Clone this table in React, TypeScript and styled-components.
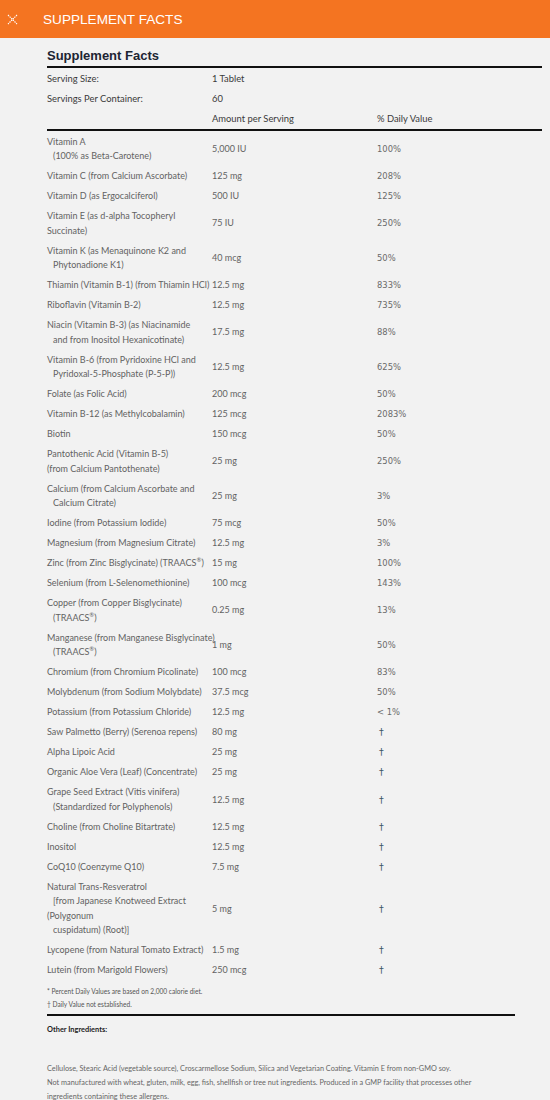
import React from 'react';
import styled, { createGlobalStyle } from 'styled-components';

const GlobalStyle = createGlobalStyle`
	html, body {
		margin: 0;
		padding: 0;
		background: #f2f2f2;
	}
	body {
		font-family: Lato, 'Liberation Sans', Arial, sans-serif;
	}
`;

const Page = styled.div`
	width: 550px;
	min-height: 1100px;
	background: #f2f2f2;
`;

const TopBar = styled.div`
	height: 38px;
	background: #f47421;
	display: flex;
	align-items: center;
	padding-left: 6px;
	gap: 25px;
`;

const CloseButton = styled.button`
	width: 12px;
	height: 12px;
	padding: 0;
	border: 0;
	background: transparent;
	display: flex;
	align-items: center;
	justify-content: center;
	cursor: pointer;
`;

const BarTitle = styled.h1`
	margin: 0;
	font-family: 'Liberation Sans', Arial, sans-serif;
	font-weight: 400;
	font-size: 13.6px;
	color: #ffffff;
`;

const Content = styled.div`
	padding: 9px 8px 0 47px;
`;

const Heading = styled.h2`
	margin: 0;
	font-family: 'Liberation Sans', Arial, sans-serif;
	font-weight: 700;
	font-size: 13px;
	line-height: 18px;
	color: #1d2533;
	padding-bottom: 1px;
	border-bottom: 2px solid #111;
`;

const Grid = styled.div`
	display: grid;
	grid-template-columns: 165px 165px 1fr;
`;

const MetaRow = styled(Grid)`
	height: 20.3px;
	align-items: center;
	font-size: 9.4px;
	color: #3a3a3a;
`;

const HeadRow = styled(MetaRow)`
	border-bottom: 2px solid #111;
`;

const Table = styled.div`
	padding-top: 1px;
`;

const Row = styled(Grid)`
	align-items: center;
	padding: 2.9px 0;
	font-size: 9px;
	line-height: 14.3px;
	color: #626262;
`;

const Name = styled.div`
	display: flex;
	flex-direction: column;
	white-space: nowrap;
`;

const NameLine = styled.span<{ $indent?: boolean }>`
	padding-left: ${(p) => (p.$indent ? '6px' : '0')};
`;

const Amount = styled.div`
	white-space: nowrap;
`;

const Daily = styled.div<{ $dagger?: boolean }>`
	font-family: 'DejaVu Sans', Verdana, sans-serif;
	font-size: ${(p) => (p.$dagger ? '9.5px' : '8.4px')};
	color: ${(p) => (p.$dagger ? '#3d5566' : '#6a6a6a')};
	padding-left: ${(p) => (p.$dagger ? '2px' : '0')};
`;

const Sup = styled.sup`
	font-size: 6px;
	line-height: 0;
`;

const Notes = styled.div`
	padding: 5px 0 3px;
	font-size: 6.6px;
	line-height: 13px;
	color: #555;
	width: 468px;
	border-bottom: 2px solid #111;
`;

const OtherTitle = styled.div`
	padding-top: 9px;
	font-size: 7.4px;
	font-weight: 700;
	color: #222;
`;

const Paragraphs = styled.div`
	padding-top: 28px;
	display: flex;
	flex-direction: column;
	gap: 0.5px;
`;

const Paragraph = styled.p`
	margin: 0;
	font-size: 7.3px;
	line-height: 13.5px;
	color: #666;
	width: 446px;
`;

interface Nutrient {
	lines: string[];
	/** indexes of lines that are indented */
	indent?: number[];
	amount: string;
	daily: string;
}

const TR = 'TRAACS';

const nutrients: Nutrient[] = [
	{ lines: ['Vitamin A', '(100% as Beta-Carotene)'], indent: [1], amount: '5,000 IU', daily: '100%' },
	{ lines: ['Vitamin C (from Calcium Ascorbate)'], amount: '125 mg', daily: '208%' },
	{ lines: ['Vitamin D (as Ergocalciferol)'], amount: '500 IU', daily: '125%' },
	{ lines: ['Vitamin E (as d-alpha Tocopheryl', 'Succinate)'], amount: '75 IU', daily: '250%' },
	{ lines: ['Vitamin K (as Menaquinone K2 and', 'Phytonadione K1)'], indent: [1], amount: '40 mcg', daily: '50%' },
	{ lines: ['Thiamin (Vitamin B-1) (from Thiamin HCl)'], amount: '12.5 mg', daily: '833%' },
	{ lines: ['Riboflavin (Vitamin B-2)'], amount: '12.5 mg', daily: '735%' },
	{ lines: ['Niacin (Vitamin B-3) (as Niacinamide', 'and from Inositol Hexanicotinate)'], indent: [1], amount: '17.5 mg', daily: '88%' },
	{ lines: ['Vitamin B-6 (from Pyridoxine HCl and', 'Pyridoxal-5-Phosphate (P-5-P))'], indent: [1], amount: '12.5 mg', daily: '625%' },
	{ lines: ['Folate (as Folic Acid)'], amount: '200 mcg', daily: '50%' },
	{ lines: ['Vitamin B-12 (as Methylcobalamin)'], amount: '125 mcg', daily: '2083%' },
	{ lines: ['Biotin'], amount: '150 mcg', daily: '50%' },
	{ lines: ['Pantothenic Acid (Vitamin B-5)', '(from Calcium Pantothenate)'], amount: '25 mg', daily: '250%' },
	{ lines: ['Calcium (from Calcium Ascorbate and', 'Calcium Citrate)'], indent: [1], amount: '25 mg', daily: '3%' },
	{ lines: ['Iodine (from Potassium Iodide)'], amount: '75 mcg', daily: '50%' },
	{ lines: ['Magnesium (from Magnesium Citrate)'], amount: '12.5 mg', daily: '3%' },
	{ lines: ['Zinc (from Zinc Bisglycinate) (' + TR + '®)'], amount: '15 mg', daily: '100%' },
	{ lines: ['Selenium (from L-Selenomethionine)'], amount: '100 mcg', daily: '143%' },
	{ lines: ['Copper (from Copper Bisglycinate)', '(' + TR + '®)'], indent: [1], amount: '0.25 mg', daily: '13%' },
	{ lines: ['Manganese (from Manganese Bisglycinate)', '(' + TR + '®)'], indent: [1], amount: '1 mg', daily: '50%' },
	{ lines: ['Chromium (from Chromium Picolinate)'], amount: '100 mcg', daily: '83%' },
	{ lines: ['Molybdenum (from Sodium Molybdate)'], amount: '37.5 mcg', daily: '50%' },
	{ lines: ['Potassium (from Potassium Chloride)'], amount: '12.5 mg', daily: '< 1%' },
	{ lines: ['Saw Palmetto (Berry) (Serenoa repens)'], amount: '80 mg', daily: '†' },
	{ lines: ['Alpha Lipoic Acid'], amount: '25 mg', daily: '†' },
	{ lines: ['Organic Aloe Vera (Leaf) (Concentrate)'], amount: '25 mg', daily: '†' },
	{ lines: ['Grape Seed Extract (Vitis vinifera)', '(Standardized for Polyphenols)'], indent: [1], amount: '12.5 mg', daily: '†' },
	{ lines: ['Choline (from Choline Bitartrate)'], amount: '12.5 mg', daily: '†' },
	{ lines: ['Inositol'], amount: '12.5 mg', daily: '†' },
	{ lines: ['CoQ10 (Coenzyme Q10)'], amount: '7.5 mg', daily: '†' },
	{
		lines: ['Natural Trans-Resveratrol', '[from Japanese Knotweed Extract', '(Polygonum', 'cuspidatum) (Root)]'],
		indent: [1, 3],
		amount: '5 mg',
		daily: '†',
	},
	{ lines: ['Lycopene (from Natural Tomato Extract)'], amount: '1.5 mg', daily: '†' },
	{ lines: ['Lutein (from Marigold Flowers)'], amount: '250 mcg', daily: '†' },
];

// renders the ® as a small superscript
const renderLine = (text: string) => {
	const i = text.indexOf('®');
	if (i < 0) return text;
	return (
		<>
			{text.slice(0, i)}
			<Sup>®</Sup>
			{text.slice(i + 1)}
		</>
	);
};

const CloseIcon = () => (
	<svg width="11" height="11" viewBox="0 0 11 11" fill="none">
		<path d="M1 1L10 10M10 1L1 10" stroke="#fff" strokeWidth="1.1" strokeDasharray="1.4 0.9" />
	</svg>
);

const App: React.FC = () => (
	<Page>
		<GlobalStyle />
		<TopBar>
			<CloseButton aria-label="Close">
				<CloseIcon />
			</CloseButton>
			<BarTitle>SUPPLEMENT FACTS</BarTitle>
		</TopBar>
		<Content>
			<Heading>Supplement Facts</Heading>
			<MetaRow>
				<span>Serving Size:</span>
				<span>1 Tablet</span>
				<span />
			</MetaRow>
			<MetaRow>
				<span>Servings Per Container:</span>
				<span>60</span>
				<span />
			</MetaRow>
			<HeadRow>
				<span />
				<span>Amount per Serving</span>
				<span>% Daily Value</span>
			</HeadRow>
			<Table>
				{nutrients.map((n) => (
					<Row key={n.lines[0]}>
						<Name>
							{n.lines.map((line, idx) => (
								<NameLine key={idx} $indent={n.indent?.includes(idx)}>
									{renderLine(line)}
								</NameLine>
							))}
						</Name>
						<Amount>{n.amount}</Amount>
						<Daily $dagger={n.daily === '†'}>{n.daily}</Daily>
					</Row>
				))}
			</Table>
			<Notes>
				<div>* Percent Daily Values are based on 2,000 calorie diet.</div>
				<div>† Daily Value not established.</div>
			</Notes>
			<OtherTitle>Other Ingredients:</OtherTitle>
			<Paragraphs>
				<Paragraph>
					Cellulose, Stearic Acid (vegetable source), Croscarmellose Sodium, Silica and Vegetarian Coating.
					Vitamin E from non-GMO soy.
				</Paragraph>
				<Paragraph>
					Not manufactured with wheat, gluten, milk, egg, fish, shellfish or tree nut ingredients. Produced in a
					GMP facility that processes other ingredients containing these allergens.
				</Paragraph>
			</Paragraphs>
		</Content>
	</Page>
);

export default App;
